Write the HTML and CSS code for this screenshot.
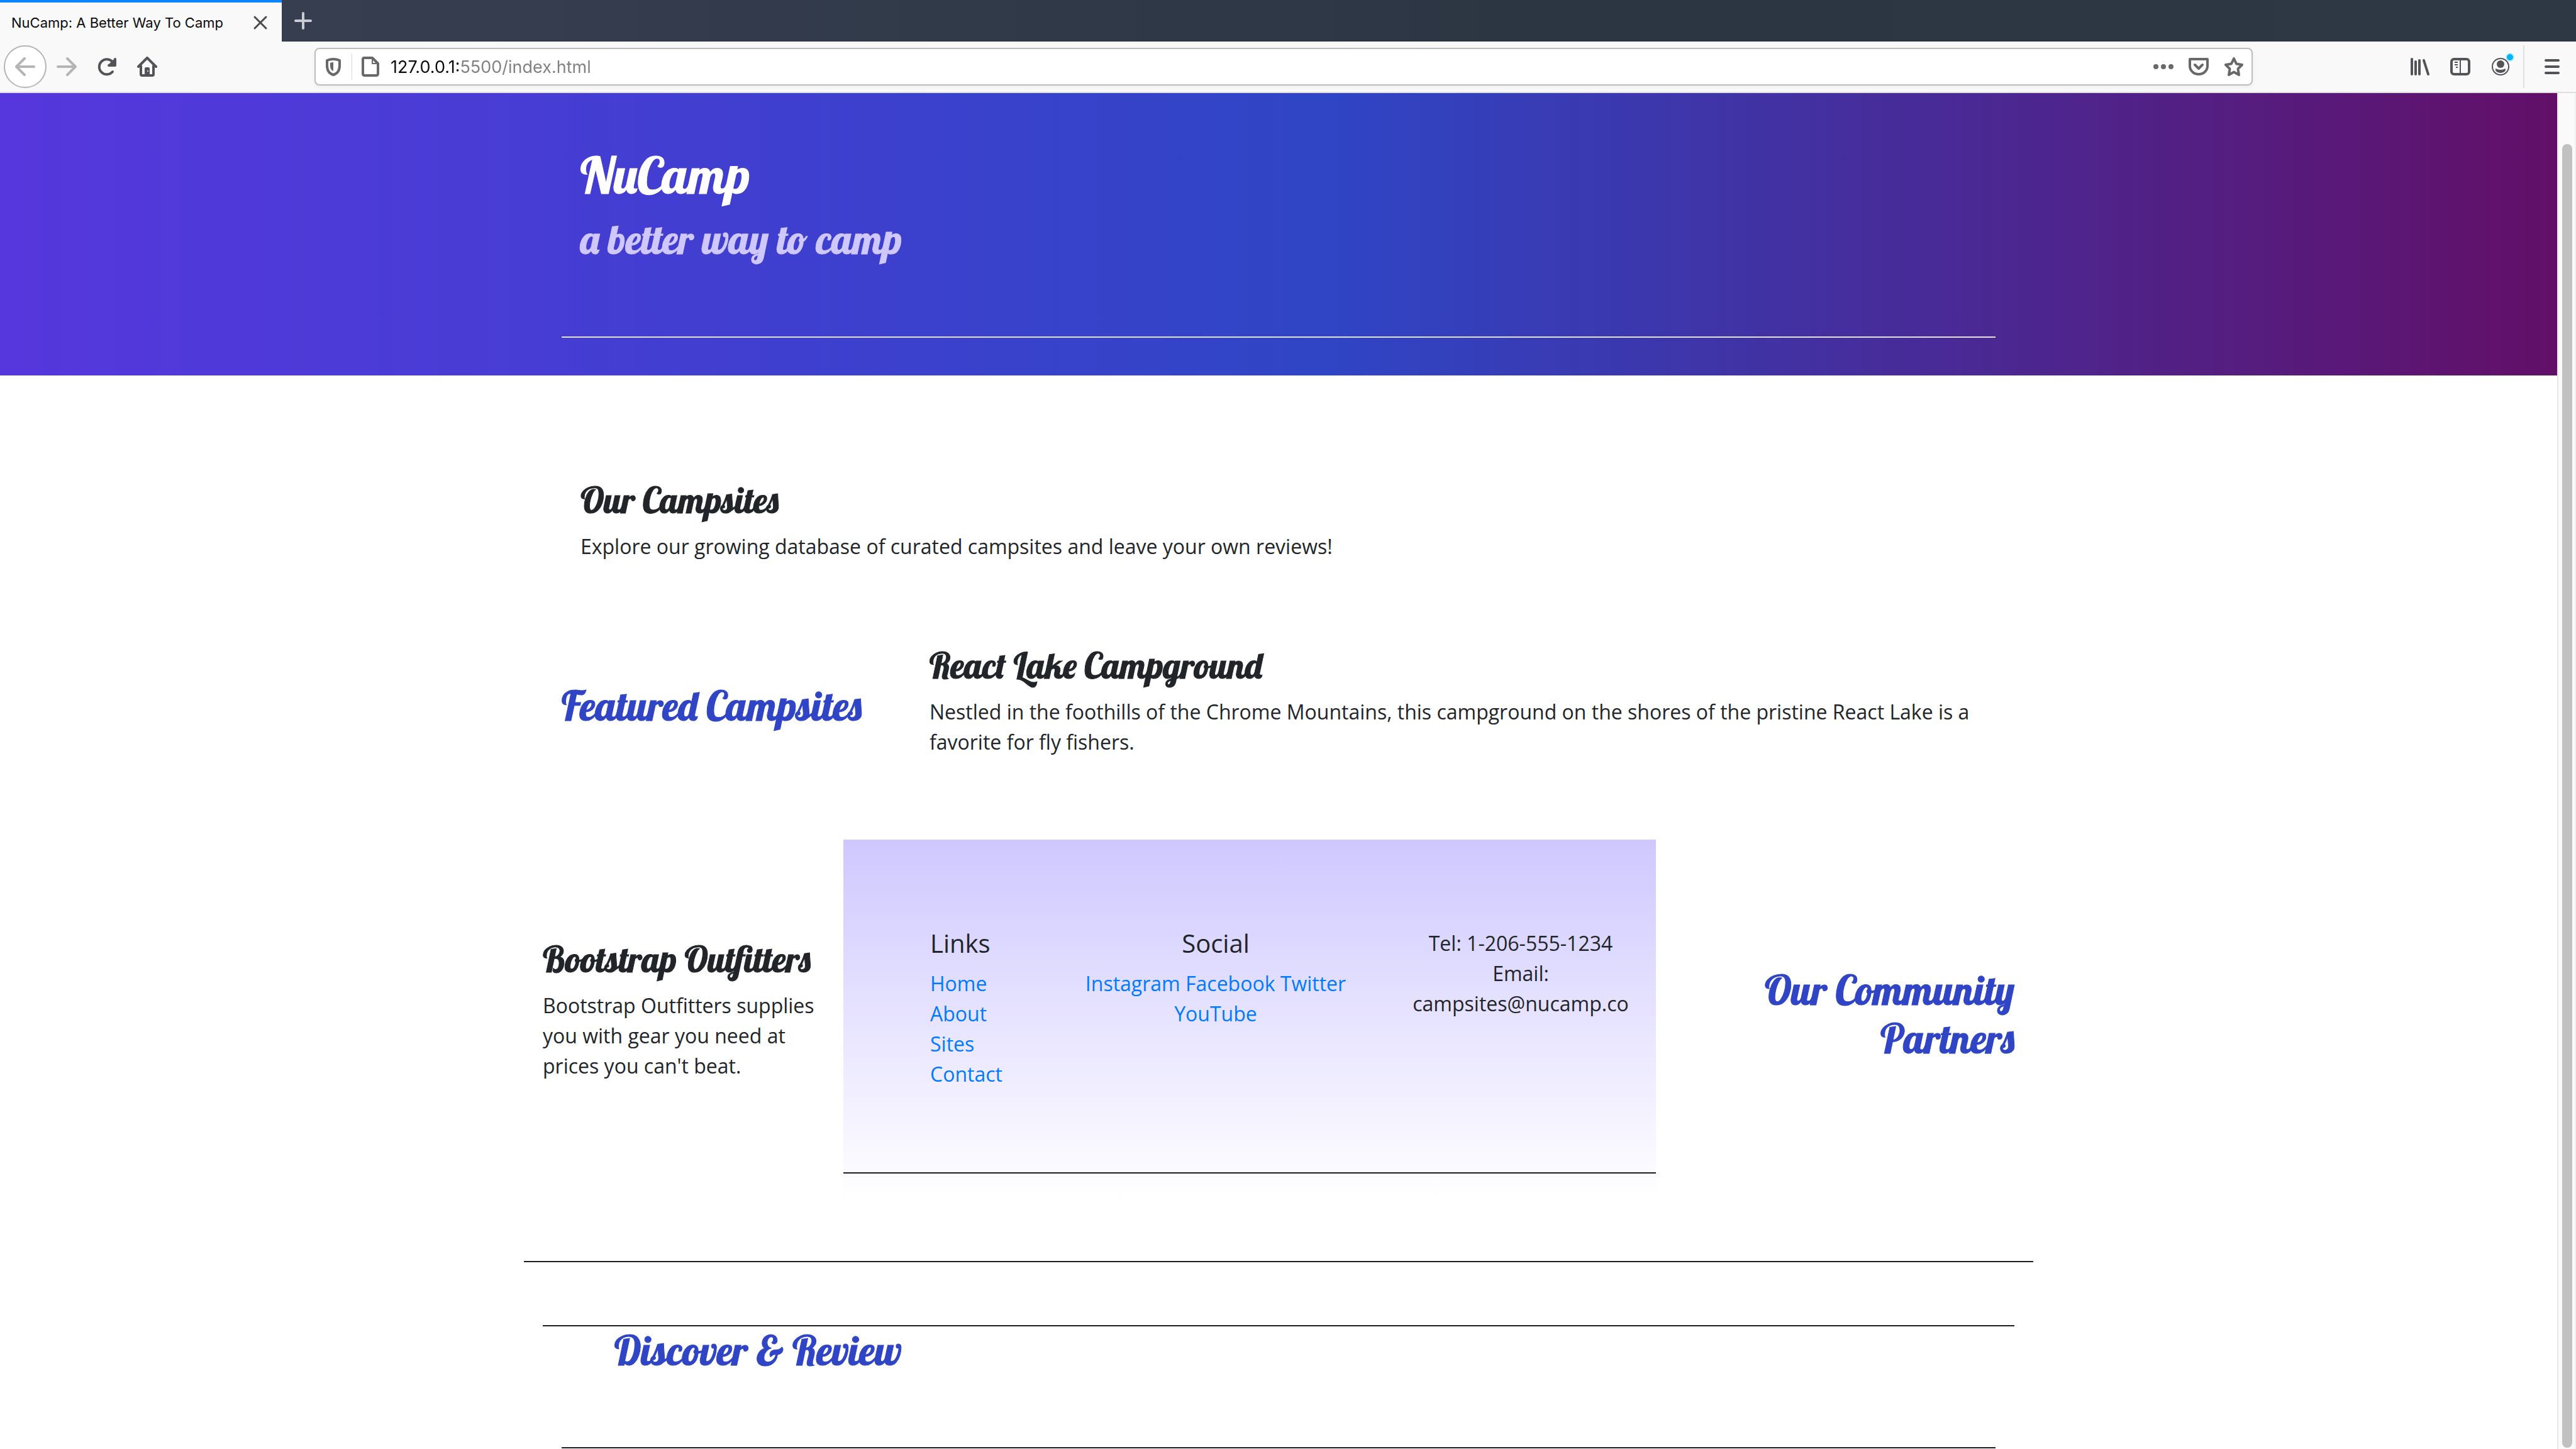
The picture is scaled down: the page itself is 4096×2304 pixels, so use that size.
FILE: index.html
```html
<!DOCTYPE html>
<html lang="en">
<head>
<meta charset="utf-8">
<title>NuCamp: A Better Way To Camp</title>
<link rel="stylesheet" href="styles.css">
</head>
<body>
<div class="tabs">
  <div class="tab">
    <span class="tab-title">NuCamp: A Better Way To Camp</span>
    <button class="icon-btn" aria-label="Close tab"><svg class="icon" viewBox="0 0 32 32" fill="none" stroke="#4a4a4f" stroke-width="3" stroke-linecap="round"><path d="M7 7l18 18M25 7L7 25"/></svg></button>
  </div>
  <button class="icon-btn new-tab" aria-label="New tab"><svg class="icon" viewBox="0 0 32 32" fill="none" stroke="#c9ccd2" stroke-width="4" stroke-linecap="round"><path d="M16 4v24M4 16h24"/></svg></button>
</div>
<div class="toolbar">
  <div class="nav-buttons">
    <button class="icon-btn back" aria-label="Back"><svg class="icon" viewBox="0 0 32 32" fill="none" stroke="#b5b5b5" stroke-width="4" stroke-linecap="round" stroke-linejoin="round"><path d="M30 16H3M15 3L2 16l13 13"/></svg></button>
    <button class="icon-btn" aria-label="Forward"><svg class="icon" viewBox="0 0 32 32" fill="none" stroke="#b5b5b5" stroke-width="4" stroke-linecap="round" stroke-linejoin="round"><path d="M2 16h27M17 3l13 13-13 13"/></svg></button>
    <button class="icon-btn" aria-label="Reload"><svg class="icon" viewBox="0 0 32 32" fill="none" stroke="#545458" stroke-width="4" stroke-linecap="round" stroke-linejoin="round"><path d="M25 24A12 12 0 1 1 26 10"/><path d="M29 4v10H19"/><path d="M28 6v7h-7z" fill="#545458"/></svg></button>
    <button class="icon-btn" aria-label="Home"><svg class="icon" viewBox="0 0 32 32" fill="none" stroke="#545458" stroke-width="4" stroke-linecap="round" stroke-linejoin="round"><path d="M2 16L16 2l14 14"/><path d="M6 15v13q0 2 2 2h16q2 0 2-2V15"/><path d="M13 28v-9q0-1 1-1h4q1 0 1 1v9z" fill="#545458" stroke-width="2"/><circle cx="17" cy="23" r="1" fill="#fff" stroke="none"/></svg></button>
  </div>
  <div class="address">
    <svg class="icon" viewBox="0 0 32 32" fill="none" stroke="#68686b" stroke-width="4" stroke-linejoin="round"><path d="M6 6q10-4 20 0v8q0 12-10 15Q6 26 6 14z"/><path d="M16 9q-3 0-5 1v5q0 6 5 8z" fill="#68686b" stroke="none"/></svg>
    <span class="address-rule"></span>
    <svg class="icon" viewBox="0 0 32 32" fill="none" stroke="#68686b" stroke-width="4" stroke-linejoin="round"><path d="M6 2h13l9 9v16q0 3-3 3H7q-3 0-3-3V4q0-2 2-2z"/><path d="M19 2v9h9" stroke-width="2"/></svg>
    <input class="url" type="text" aria-label="Address" value="127.0.0.1:5500/index.html">
    <button class="icon-btn" aria-label="Page actions"><svg class="icon" viewBox="0 0 32 32" fill="#68686b"><circle cx="4" cy="16" r="4"/><circle cx="16" cy="16" r="4"/><circle cx="28" cy="16" r="4"/></svg></button>
    <button class="icon-btn" aria-label="Save to Pocket"><svg class="icon" viewBox="0 0 32 32" fill="none" stroke="#68686b" stroke-width="4" stroke-linecap="round" stroke-linejoin="round"><path d="M2 4h28v11a14 13 0 0 1-28 0z"/><path d="M10 13l6 6 6-6"/></svg></button>
    <button class="icon-btn" aria-label="Bookmark"><svg class="icon" viewBox="0 0 32 32" fill="none" stroke="#68686b" stroke-width="4" stroke-linejoin="round"><path d="M16 3l4 8.500 9 1.500-6.500 6.500L24 29l-8-4.500L8 29l1.500-9.500L3 13l9-1.500z"/></svg></button>
  </div>
  <div class="menu-buttons">
    <button class="icon-btn" aria-label="Library"><svg class="icon" viewBox="0 0 32 32" fill="none" stroke="#545458" stroke-width="4" stroke-linecap="round"><path d="M3 4v24M9 8v20M15 6v22M22 6l7 22"/></svg></button>
    <button class="icon-btn" aria-label="Sidebars"><svg class="icon" viewBox="0 0 32 32" fill="none" stroke="#545458" stroke-width="4"><rect x="2" y="4" width="28" height="24" rx="4"/><path d="M16 4v24M7 9h5M7 13h5M9 17h3" stroke-width="2"/></svg></button>
    <button class="icon-btn account" aria-label="Account"><svg class="icon" viewBox="0 0 32 32" fill="#545458"><circle cx="16" cy="16" r="13" fill="none" stroke="#545458" stroke-width="2"/><circle cx="16" cy="12" r="6"/><path d="M8 19q8 4 16 0q1 6-8 7q-9-1-8-7z"/></svg><span class="badge"></span></button>
    <span class="menu-rule"></span>
    <button class="icon-btn" aria-label="Menu"><svg class="icon" viewBox="0 0 32 32" fill="none" stroke="#545458" stroke-width="4" stroke-linecap="round"><path d="M6 6h20M6 16h20M6 26h20"/></svg></button>
  </div>
</div>
<div class="viewport">
  <div class="page">
    <header class="hero">
      <div class="container">
        <div class="column">
          <h1>NuCamp</h1>
          <h2 class="tagline">a better way to camp</h2>
        </div>
        <hr class="rule rule-light">
      </div>
    </header>
    <main class="container">
      <section class="column intro">
        <h3>Our Campsites</h3>
        <p>Explore our growing database of curated campsites and leave your own reviews!</p>
      </section>
      <section class="featured">
        <h2>Featured Campsites</h2>
        <div>
          <h3>React Lake Campground</h3>
          <p>Nestled in the foothills of the Chrome Mountains, this campground on the shores of the pristine React Lake is a favorite for fly fishers.</p>
        </div>
      </section>
      <section class="partners">
        <div>
          <h3>Bootstrap Outfitters</h3>
          <p>Bootstrap Outfitters supplies you with gear you need at prices you can't beat.</p>
        </div>
        <footer class="site-footer">
          <div class="footer-columns">
            <nav>
              <h5>Links</h5>
              <ul>
                <li><a href="#">Home</a></li>
                <li><a href="#">About</a></li>
                <li><a href="#">Sites</a></li>
                <li><a href="#">Contact</a></li>
              </ul>
            </nav>
            <div class="social">
              <h5>Social</h5>
              <a href="#">Instagram</a> <a href="#">Facebook</a> <a href="#">Twitter</a> <a href="#">YouTube</a>
            </div>
            <div class="contact">Tel: 1-206-555-1234<br>Email: campsites@nucamp.co</div>
          </div>
          <hr class="rule">
        </footer>
        <h2 class="partners-title">Our Community Partners</h2>
      </section>
      <hr class="rule rule-wide">
      <section class="discover">
        <hr class="rule">
        <h2 class="discover-title">Discover &amp; Review</h2>
      </section>
      <hr class="rule">
    </main>
  </div>
  <div class="scrollbar"><div class="thumb"></div></div>
</div>
</body>
</html>
```
FILE: styles.css
```css
* { box-sizing: border-box; }

body {
  margin: 0;
  height: 100vh;
  overflow: hidden;
  display: flex;
  flex-direction: column;
  background: #fff;
  color: #212529;
  font: 32px/48px "Open Sans", sans-serif;
}

h1, h2, h3 {
  margin: 0 0 16px;
  font-family: "Lobster", "Liberation Serif", cursive;
  font-weight: 500;
  -webkit-text-stroke: 1px currentColor;
}
h1 { font-size: 80px; line-height: 96px; }
h2 { font-size: 64px; line-height: 77px; color: #2f45c5; }
h3 { font-size: 56px; line-height: 67px; }
h5 { margin: 0 0 16px; font-size: 40px; line-height: 48px; font-weight: 400; }
p { margin: 0 0 32px; }
a { color: #007bff; text-decoration: none; }
ul { margin: 0; padding: 0; list-style: none; }

/* Browser tabs */
.tabs {
  flex: none;
  display: flex;
  height: 66px;
  background: linear-gradient(to right, #394053, #2c3643 60%, #2e3845);
  border-bottom: 1px solid #292b3a;
}
.tab {
  display: flex;
  align-items: center;
  justify-content: space-between;
  width: 448px;
  height: 66px;
  padding: 2px 18px 0;
  border-top: 4px solid #0a84ff;
  background: #f9f9fa;
}
.tab-title { font: 22px/32px Inter, sans-serif; color: #0c0c0d; white-space: nowrap; }

.icon { display: block; width: 32px; height: 32px; flex: none; }
.icon-btn { display: block; padding: 0; border: 0; background: none; }
.new-tab { margin-left: 18px; }

/* Browser toolbar */
.toolbar {
  flex: none;
  display: flex;
  align-items: center;
  height: 82px;
  padding: 0 22px 0 6px;
  background: #f9f9fa;
  border-bottom: 2px solid #e0e0e1;
}
.nav-buttons { display: flex; align-items: center; gap: 32px; }
.back {
  padding: 16px;
  margin-right: -16px;
  border: 2px solid #b5b5b5;
  border-radius: 50%;
  background: #fff;
}
.address {
  flex: 1;
  display: flex;
  align-items: center;
  height: 60px;
  margin: 0 250px;
  padding: 0 12px;
  gap: 24px;
  border: 2px solid #bdbdbe;
  border-radius: 8px;
  background: #fff;
  box-shadow: 0 2px 6px rgba(0, 0, 0, .06);
}
.address-rule { width: 1px; height: 42px; margin: 0 -11px; background: #d7d7db; }
.url {
  flex: 1;
  min-width: 0;
  padding: 2px 0 0;
  border: 0;
  margin-left: -8px;
  font: 27px/40px Inter, sans-serif;
  color: #0c0c0d;
  background: linear-gradient(to right, #0c0c0d 108px, #808080 108px);
  -webkit-background-clip: text;
  background-clip: text;
  -webkit-text-fill-color: transparent;
}
.menu-buttons { display: flex; align-items: center; gap: 32px; }
.account { position: relative; }
.badge {
  position: absolute;
  right: -6px;
  top: -6px;
  width: 14px;
  height: 14px;
  border: 2px solid #b9ebfd;
  border-radius: 50%;
  background: #00b3f4;
}
.menu-rule { width: 2px; height: 68px; margin: 0 -4px 0 -12px; background: #e0e0e1; }

/* Page area with its scroll bar */
.viewport { flex: 1; min-height: 0; display: grid; grid-template-columns: minmax(0, 1fr) 30px; }
.page { overflow: hidden; }
.scrollbar { border-left: 2px solid #e8e8e8; border-right: 2px solid #f0f0f0; background: #fafafa; padding: 81px 4px 2px 6px; }
.thumb { height: 100%; border-radius: 8px; background: #c1c1c1; }

.container { max-width: 2280px; margin: 0 auto; }
.column { padding: 0 30px; }
.rule { margin: 0; border: 0; height: 2px; background: #1a1e23; }
.rule-light { background: #e2e2ee; }
.rule-wide { margin: 0 -60px; }

.hero {
  padding: 82px 0 60px;
  background: linear-gradient(to right, #5637dd, #2f45c5 52%, #620f67);
  color: #fff;
}
.tagline { margin-bottom: 116px; color: #cfc8ff; }

.intro { padding-top: 165px; }

.featured {
  display: grid;
  grid-template-columns: 1fr 3fr;
  gap: 20px;
  align-items: center;
  margin-top: 132px;
}

.partners {
  display: grid;
  grid-template-columns: 448px minmax(0, 1fr) 540px;
  column-gap: 30px;
  align-items: center;
  margin: 99px -30px 98px;
}
.partners-title { text-align: right; margin-left: 30px; }
.site-footer {
  height: 572px;
  padding-top: 141px;
  background: linear-gradient(#cfc8ff, #fff);
}
.footer-columns {
  display: grid;
  grid-template-columns: 238fr 432fr 484fr;
  min-height: 388px;
  padding-left: 138px;
}
.social { text-align: center; }
.contact { text-align: center; padding: 0 30px 0 84px; }

.discover { margin: 100px -30px 115px; }
.discover-title { margin-left: 114px; }
```
